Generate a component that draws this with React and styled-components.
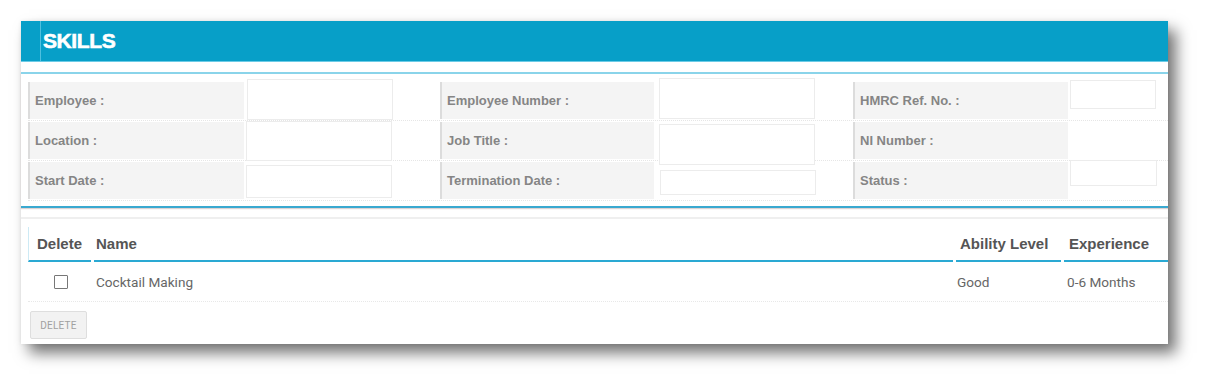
import React from "react";
import styled, { createGlobalStyle } from "styled-components";

const Global = createGlobalStyle`
  html, body { margin: 0; padding: 0; background: #fff; }
  body { font-family: Roboto, "Liberation Sans", Arial, sans-serif; }
`;

const Page = styled.div`
  padding: 21px 40px 36px 21px;
`;

const Card = styled.div`
  width: 1147px;
  background: #fff;
  box-shadow: 8px 9px 14px rgba(0, 0, 0, 0.55), 0 0 4px rgba(0, 0, 0, 0.08);
`;

const Header = styled.div`
  height: 40px;
  background: #079fc8;
  border-bottom: 1px solid #6ccbe6;
  display: flex;
  align-items: center;
  padding-left: 19px;
`;

const Title = styled.h1`
  margin: 0;
  height: 100%;
  display: flex;
  align-items: center;
  padding-left: 2px;
  border-left: 1px solid #4fc0df;
  color: #fff;
  font-family: "Liberation Sans", Arial, sans-serif;
  font-weight: 700;
  font-size: 21px;
  letter-spacing: -0.4px;
  -webkit-text-stroke: 0.6px #fff;
`;

const FormPanel = styled.div`
  margin-top: 10px;
  border-top: 2px solid #8ad4ea;
  border-bottom: 2px solid #3aa9d0;
  box-shadow: 0 1px 1px rgba(120, 80, 80, 0.25);
  padding: 7px 0 5px 7px;
`;

const FormRow = styled.div`
  height: 40px;
  display: grid;
  grid-template-columns: 216px 196px 214px 199px 215px 1fr;
  grid-template-rows: 39px;
  border-bottom: 1px dotted #e6e6e6;
  box-sizing: border-box;
`;

const Label = styled.div`
  margin: 1px 0 1px 0;
  background: #f4f4f4;
  border-left: 2px solid #dcdcdc;
  padding-left: 5px;
  display: flex;
  align-items: center;
  color: #858585;
  font-family: "Liberation Sans", Arial, sans-serif;
  font-weight: 700;
  font-size: 13px;
`;

const InputCell = styled.div`
  display: flex;
  align-items: flex-start;
  min-height: 0;
`;

const Input = styled.div`
  box-sizing: border-box;
  width: ${(p) => p.$w}px;
  height: ${(p) => p.$h}px;
  margin-top: ${(p) => p.$mt}px;
  margin-left: ${(p) => p.$ml}px;
  background: #fff;
  border: 1px solid #ececec;
  flex-shrink: 0;
  position: relative;
`;

const TableSection = styled.div`
  margin-top: 9px;
  border-top: 2px solid #efefef;
  padding: 0 0 5px 7px;
`;

const Grid = styled.div`
  display: grid;
  grid-template-columns: 63px 1fr 106px 105px;
  column-gap: 2px;
`;

const HeadRow = styled(Grid)`
  height: 43px;
  align-items: end;
`;

const HeadCell = styled.div`
  height: 35px;
  box-sizing: border-box;
  display: flex;
  align-items: center;
  padding-left: ${(p) => p.$pl}px;
  padding-bottom: 1px;
  border-bottom: 2px solid #2aa9d3;
  border-left: ${(p) => (p.$first ? "1px solid #cdeaf5" : "none")};
  margin-left: ${(p) => (p.$first ? "0" : "1px")};
  color: #555;
  font-family: "Liberation Sans", Arial, sans-serif;
  font-weight: 700;
  font-size: 15px;
  white-space: nowrap;
`;

const DataRow = styled(Grid)`
  height: 39px;
  align-items: center;
  border-bottom: 1px dotted #e8e8e8;
`;

const DataCell = styled.div`
  padding-left: ${(p) => p.$pl}px;
  color: #666;
  font-size: 13.6px;
  display: flex;
  justify-content: ${(p) => (p.$center ? "center" : "flex-start")};
`;

const Checkbox = styled.span`
  width: 14px;
  height: 14px;
  box-sizing: border-box;
  border: 1px solid #777;
  border-radius: 1px;
  background: #fff;
  margin-left: 2px;
`;

const Button = styled.button`
  display: block;
  margin: 9px 0 0 2px;
  width: 57px;
  height: 28px;
  background: #f2f2f2;
  border: 1px solid #dedede;
  border-radius: 2px;
  color: #a0a0a0;
  font-family: Roboto, "Liberation Sans", Arial, sans-serif;
  font-size: 10px;
  letter-spacing: 0.2px;
  padding: 0;
`;

const rows = [
  {
    labels: ["Employee :", "Employee Number :", "HMRC Ref. No. :"],
    inputs: [
      { w: 146, h: 41, mt: -2, ml: 3 },
      { w: 156, h: 41, mt: -3, ml: 5 },
      { w: 86, h: 29, mt: -1, ml: 2 },
    ],
  },
  {
    labels: ["Location :", "Job Title :", "NI Number :"],
    inputs: [
      { w: 146, h: 40, mt: 0, ml: 2 },
      { w: 156, h: 41, mt: 3, ml: 5 },
      null,
    ],
  },
  {
    labels: ["Start Date :", "Termination Date :", "Status :"],
    inputs: [
      { w: 146, h: 33, mt: 4, ml: 2 },
      { w: 156, h: 25, mt: 9, ml: 6 },
      { w: 87, h: 26, mt: -1, ml: 2 },
    ],
  },
];

export default function App() {
  return (
    <>
      <Global />
      <Page>
        <Card>
          <Header>
            <Title>SKILLS</Title>
          </Header>
          <FormPanel>
            {rows.map((r, i) => (
              <FormRow key={i}>
                {r.labels.map((l, j) => (
                  <React.Fragment key={j}>
                    <Label>{l}</Label>
                    <InputCell>
                      {r.inputs[j] && (
                        <Input
                          $w={r.inputs[j].w}
                          $h={r.inputs[j].h}
                          $mt={r.inputs[j].mt}
                          $ml={r.inputs[j].ml}
                        />
                      )}
                    </InputCell>
                  </React.Fragment>
                ))}
              </FormRow>
            ))}
          </FormPanel>
          <TableSection>
            <HeadRow>
              <HeadCell $first $pl={8}>Delete</HeadCell>
              <HeadCell $pl={2}>Name</HeadCell>
              <HeadCell $pl={4}>Ability Level</HeadCell>
              <HeadCell $pl={5}>Experience</HeadCell>
            </HeadRow>
            <DataRow>
              <DataCell $center>
                <Checkbox />
              </DataCell>
              <DataCell $pl={3}>Cocktail Making</DataCell>
              <DataCell $pl={2}>Good</DataCell>
              <DataCell $pl={4}>0-6 Months</DataCell>
            </DataRow>
            <Button>DELETE</Button>
          </TableSection>
        </Card>
      </Page>
    </>
  );
}
